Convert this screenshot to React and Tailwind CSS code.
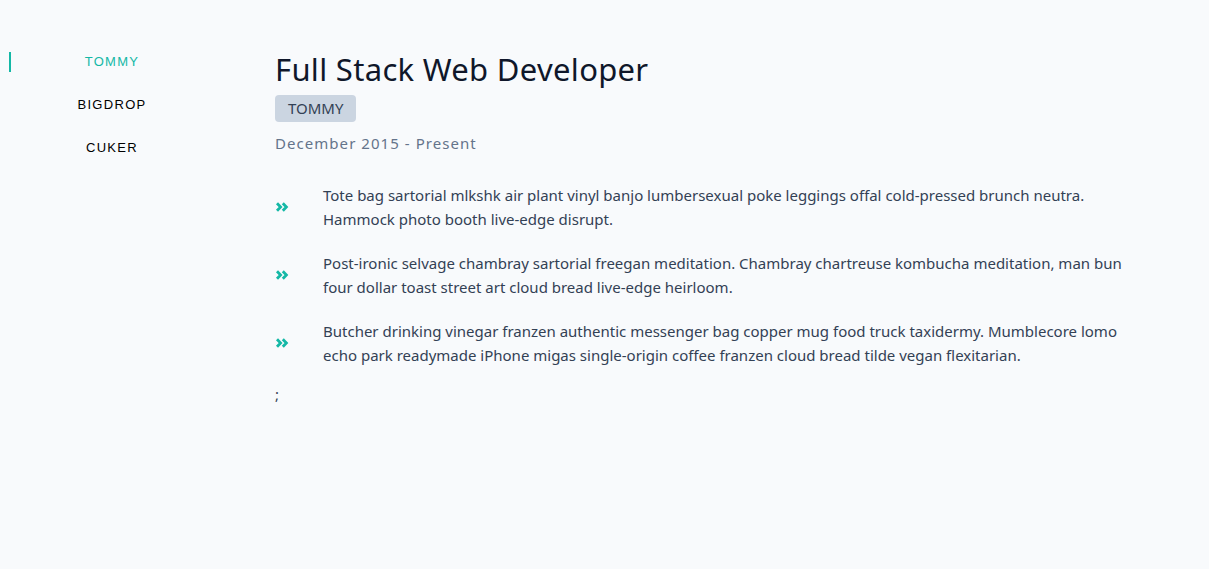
import React from "react";

const items = [
  "Tote bag sartorial mlkshk air plant vinyl banjo lumbersexual poke leggings offal cold-pressed brunch neutra. Hammock photo booth live-edge disrupt.",
  "Post-ironic selvage chambray sartorial freegan meditation. Chambray chartreuse kombucha meditation, man bun four dollar toast street art cloud bread live-edge heirloom.",
  "Butcher drinking vinegar franzen authentic messenger bag copper mug food truck taxidermy. Mumblecore lomo echo park readymade iPhone migas single-origin coffee franzen cloud bread tilde vegan flexitarian.",
];

function Chevrons() {
  return (
    <svg width="15" height="14" viewBox="0 0 15 14" fill="none" stroke="#14b8a6" strokeWidth="2.8" strokeLinecap="butt" strokeLinejoin="miter">
      <path d="M2 3.2 L5.6 7 L2 10.8" />
      <path d="M7.8 3.2 L11.4 7 L7.8 10.8" />
    </svg>
  );
}

export default function App() {
  return (
    <div className="min-h-[569px] bg-[#f8fafc] flex" style={{ fontFamily: '"Noto Sans", sans-serif' }}>
      <nav className="w-[222px] pt-[52px] pl-[9px] flex flex-col gap-[23px]" style={{ fontFamily: '"Liberation Sans", Arial, sans-serif' }}>
        <div className="w-[204px] border-l-2 border-[#14b8a6] h-[20px] flex items-center justify-center text-[13px] tracking-[0.1em] text-[#14b8a6]">TOMMY</div>
        <div className="w-[204px] border-l-2 border-transparent h-[20px] flex items-center justify-center text-[13px] tracking-[0.1em] text-black">BIGDROP</div>
        <div className="w-[204px] border-l-2 border-transparent h-[20px] flex items-center justify-center text-[13px] tracking-[0.1em] text-black">CUKER</div>
      </nav>
      <main className="pl-[53px] pt-[49px] w-[913px]">
        <h1 className="text-[31px] leading-[40px] text-[#0f172a] tracking-[0.01em]">Full Stack Web Developer</h1>
        <div className="mt-[6px]">
          <span className="inline-block bg-[#cbd5e1] text-[#334155] text-[15px] leading-[27px] px-[13px] rounded-[4px]">TOMMY</span>
        </div>
        <div className="mt-[9px] text-[15px] leading-[24px] tracking-[0.07em] text-[#64748b]">December 2015 - Present</div>
        <ul className="mt-[28px] flex flex-col gap-[20px]">
          {items.map((t, i) => (
            <li key={i} className="flex items-center">
              <span className="w-[48px] shrink-0 flex"><Chevrons /></span>
              <span className="text-[15px] leading-[24px] text-[#334155]">{t}</span>
            </li>
          ))}
        </ul>
        <div className="mt-[16px] text-[15px] text-[#334155]">;</div>
      </main>
    </div>
  );
}
